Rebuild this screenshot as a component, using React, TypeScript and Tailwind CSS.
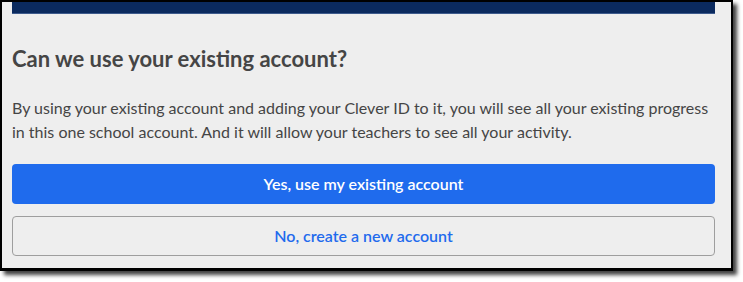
export default function App() {
  return (
    <div className="w-[743px] h-[282px] bg-white" style={{ fontFamily: 'Lato, "Open Sans", sans-serif' }}>
      <div className="w-[733px] h-[271px] bg-[#eeeeee] border-black border-l-2 border-r-2 border-t-2 border-b-[3px] pl-[10px] pr-[16px] shadow-[4px_4px_4px_rgba(0,0,0,0.75)]">
        <div className="h-[12px] bg-[#0b2a5e] border-b border-[#3d5a8c]" />
        <h1 className="mt-[31px] text-[22px] leading-[28px] font-bold text-[#454545]">
          Can we use your existing account?
        </h1>
        <p className="mt-[23px] text-[16px] leading-[24px] text-[#454545]">
          By using your existing account and adding your Clever ID to it, you will see all your existing progress
          in this one school account. And it will allow your teachers to see all your activity.
        </p>
        <button className="mt-[20px] w-full h-[40px] rounded-[4px] bg-[#1f6bed] text-white text-[16px] font-semibold">
          Yes, use my existing account
        </button>
        <button className="mt-[12px] w-full h-[40px] rounded-[4px] border border-[#9e9e9e] bg-[#eeeeee] text-[#1f6bed] text-[16px] font-semibold">
          No, create a new account
        </button>
      </div>
    </div>
  )
}
